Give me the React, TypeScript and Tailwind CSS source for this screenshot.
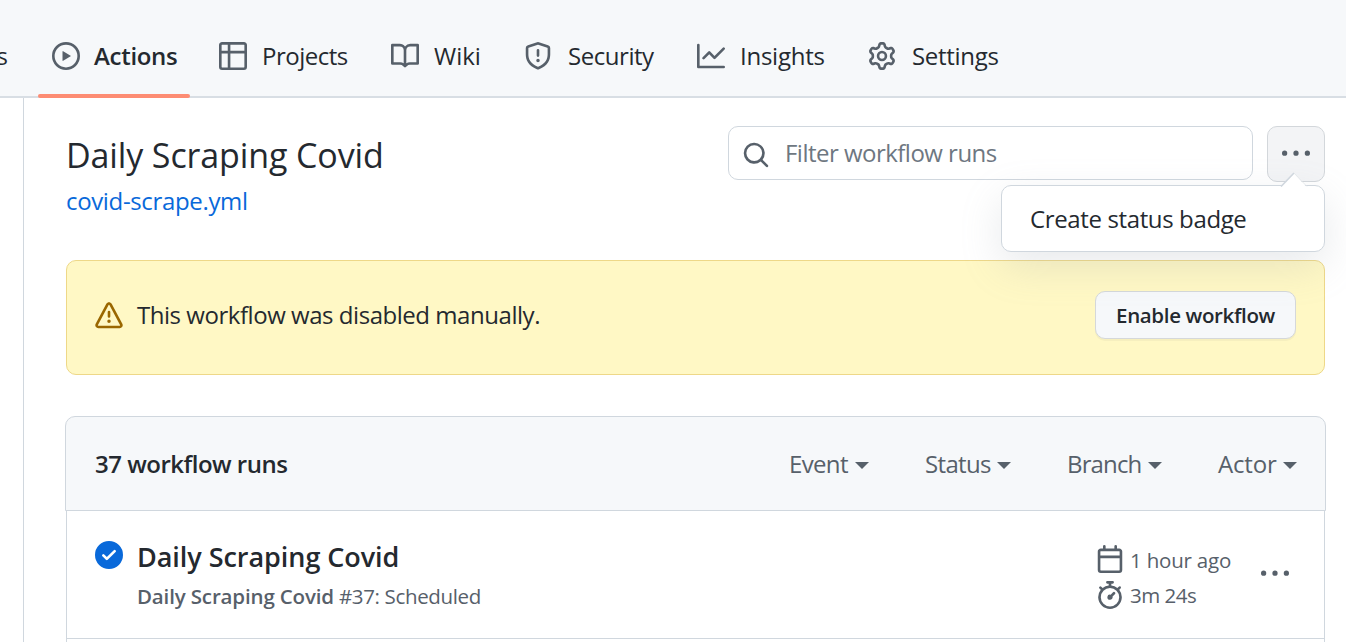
import React from 'react';

const icons = {
  play: 'M8 0a8 8 0 1 1 0 16A8 8 0 0 1 8 0ZM1.5 8a6.5 6.5 0 1 0 13 0 6.5 6.5 0 0 0-13 0Zm4.879-2.773 4.264 2.559a.25.25 0 0 1 0 .428l-4.264 2.559A.25.25 0 0 1 6 10.559V5.442a.25.25 0 0 1 .379-.215Z',
  table: 'M0 1.75C0 .784.784 0 1.75 0h12.5C15.216 0 16 .784 16 1.75v12.5A1.75 1.75 0 0 1 14.25 16H1.75A1.75 1.75 0 0 1 0 14.25ZM6.5 6.5v8h7.75a.25.25 0 0 0 .25-.25V6.5Zm8-1.5V1.75a.25.25 0 0 0-.25-.25H6.5V5Zm-13 1.5v7.75c0 .138.112.25.25.25H5v-8ZM5 5V1.5H1.75a.25.25 0 0 0-.25.25V5Z',
  book: 'M0 1.75A.75.75 0 0 1 .75 1h4.253c1.227 0 2.317.59 3 1.501A3.743 3.743 0 0 1 11.006 1h4.245a.75.75 0 0 1 .75.75v10.5a.75.75 0 0 1-.75.75h-4.507a2.25 2.25 0 0 0-1.591.659l-.622.621a.75.75 0 0 1-1.06 0l-.622-.621A2.25 2.25 0 0 0 5.258 13H.75a.75.75 0 0 1-.75-.75Zm7.251 10.324.004-5.073-.002-2.253A2.25 2.25 0 0 0 5.003 2.5H1.5v9h3.757a3.75 3.75 0 0 1 1.994.574ZM8.755 4.75l-.004 7.322a3.752 3.752 0 0 1 1.992-.572H14.5v-9h-3.495a2.25 2.25 0 0 0-2.25 2.25Z',
  shield: 'M7.467.133a1.748 1.748 0 0 1 1.066 0l5.25 1.68A1.75 1.75 0 0 1 15 3.48V7c0 1.566-.32 3.182-1.303 4.682-.983 1.498-2.585 2.813-5.032 3.855a1.697 1.697 0 0 1-1.33 0c-2.447-1.042-4.049-2.357-5.032-3.855C1.32 10.182 1 8.566 1 7V3.48a1.75 1.75 0 0 1 1.217-1.667Zm.61 1.429a.25.25 0 0 0-.153 0l-5.25 1.68a.25.25 0 0 0-.174.238V7c0 1.358.275 2.666 1.057 3.86.784 1.194 2.121 2.34 4.366 3.297a.196.196 0 0 0 .154 0c2.245-.956 3.582-2.104 4.366-3.298C13.225 9.666 13.5 8.36 13.5 7V3.48a.251.251 0 0 0-.174-.237l-5.25-1.68ZM8.75 4.75v3a.75.75 0 0 1-1.5 0v-3a.75.75 0 0 1 1.5 0ZM9 10.5a1 1 0 1 1-2 0 1 1 0 0 1 2 0Z',
  graph: 'M1.5 1.75V13.5h13.75a.75.75 0 0 1 0 1.5H.75a.75.75 0 0 1-.75-.75V1.75a.75.75 0 0 1 1.5 0Zm14.28 2.53-5.25 5.25a.75.75 0 0 1-1.06 0L7 7.06 4.28 9.78a.751.751 0 0 1-1.042-.018.751.751 0 0 1-.018-1.042l3.25-3.25a.75.75 0 0 1 1.06 0L10 7.94l4.72-4.72a.751.751 0 0 1 1.042.018.751.751 0 0 1 .018 1.042Z',
  gear: 'M8 0a8.2 8.2 0 0 1 .701.031C9.444.095 9.99.645 10.16 1.29l.288 1.107c.018.066.079.158.212.224.231.114.454.243.668.386.123.082.233.09.299.071l1.103-.303c.644-.176 1.392.021 1.82.63.27.385.506.792.704 1.218.315.675.111 1.422-.364 1.891l-.814.806c-.049.048-.098.147-.088.294.016.257.016.515 0 .772-.01.147.038.246.088.294l.814.806c.475.469.679 1.216.364 1.891a7.977 7.977 0 0 1-.704 1.217c-.428.61-1.176.807-1.82.63l-1.102-.302c-.067-.019-.177-.011-.3.071a5.909 5.909 0 0 1-.668.386c-.133.066-.194.158-.211.224l-.29 1.106c-.168.646-.715 1.196-1.458 1.26a8.006 8.006 0 0 1-1.402 0c-.743-.064-1.289-.614-1.458-1.26l-.289-1.106c-.018-.066-.079-.158-.212-.224a5.738 5.738 0 0 1-.668-.386c-.123-.082-.233-.09-.299-.071l-1.103.303c-.644.176-1.392-.021-1.82-.63a8.12 8.12 0 0 1-.704-1.218c-.315-.675-.111-1.422.363-1.891l.815-.806c.05-.048.098-.147.088-.294a6.214 6.214 0 0 1 0-.772c.01-.147-.038-.246-.088-.294l-.815-.806C.635 6.045.431 5.298.746 4.623a7.92 7.92 0 0 1 .704-1.217c.428-.61 1.176-.807 1.82-.63l1.102.302c.067.019.177.011.3-.071.214-.143.437-.272.668-.386.133-.066.194-.158.211-.224l.29-1.106C6.009.645 6.556.095 7.299.03 7.53.01 7.764 0 8 0Zm-.571 1.525c-.036.003-.108.036-.137.146l-.289 1.105c-.147.561-.549.967-.998 1.189-.173.086-.34.183-.5.29-.417.278-.97.423-1.529.27l-1.103-.303c-.109-.03-.175.016-.195.045-.22.312-.412.644-.573.99-.014.031-.021.11.059.19l.815.806c.411.406.562.957.53 1.456a4.709 4.709 0 0 0 0 .582c.032.499-.119 1.05-.53 1.456l-.815.806c-.081.08-.073.159-.059.19.162.346.353.677.573.989.02.03.085.076.195.046l1.102-.303c.56-.153 1.113-.008 1.53.27.161.107.328.204.501.29.447.222.85.629.997 1.189l.289 1.105c.029.109.101.143.137.146a6.6 6.6 0 0 0 1.142 0c.036-.003.108-.036.137-.146l.289-1.105c.147-.561.549-.967.998-1.189.173-.086.34-.183.5-.29.417-.278.97-.423 1.529-.27l1.103.303c.109.029.175-.016.195-.045.22-.313.411-.644.573-.99.014-.031.021-.11-.059-.19l-.815-.806c-.411-.406-.562-.957-.53-1.456a4.709 4.709 0 0 0 0-.582c-.032-.499.119-1.05.53-1.456l.815-.806c.081-.08.073-.159.059-.19a6.464 6.464 0 0 0-.573-.989c-.02-.03-.085-.076-.195-.046l-1.102.303c-.56.153-1.113.008-1.53-.27a4.44 4.44 0 0 0-.501-.29c-.447-.222-.85-.629-.997-1.189l-.289-1.105c-.029-.11-.101-.143-.137-.146a6.6 6.6 0 0 0-1.142 0ZM11 8a3 3 0 1 1-6 0 3 3 0 0 1 6 0ZM9.5 8a1.5 1.5 0 1 0-3.001.001A1.5 1.5 0 0 0 9.5 8Z',
  search: 'M10.68 11.74a6 6 0 0 1-7.922-8.982 6 6 0 0 1 8.982 7.922l3.04 3.04a.749.749 0 0 1-.326 1.275.749.749 0 0 1-.734-.215ZM11.5 7a4.499 4.499 0 1 0-8.997 0A4.499 4.499 0 0 0 11.5 7Z',
  kebab: 'M8 9a1.5 1.5 0 1 0 0-3 1.5 1.5 0 0 0 0 3ZM1.5 9a1.5 1.5 0 1 0 0-3 1.5 1.5 0 0 0 0 3Zm13 0a1.5 1.5 0 1 0 0-3 1.5 1.5 0 0 0 0 3Z',
  alert: 'M8.22 1.754a.25.25 0 0 0-.44 0L1.698 13.132a.25.25 0 0 0 .22.368h12.164a.25.25 0 0 0 .22-.368L8.22 1.754Zm-1.763-.707c.659-1.234 2.427-1.234 3.086 0l6.082 11.378A1.75 1.75 0 0 1 14.082 15H1.918a1.75 1.75 0 0 1-1.543-2.575L6.457 1.047ZM9 11a1 1 0 1 1-2 0 1 1 0 0 1 2 0Zm-.25-5.25a.75.75 0 0 0-1.5 0v2.5a.75.75 0 0 0 1.5 0v-2.5Z',
  check: 'M8 16A8 8 0 1 1 8 0a8 8 0 0 1 0 16Zm3.78-9.72a.751.751 0 0 0-.018-1.042.751.751 0 0 0-1.042-.018L6.75 9.19 5.28 7.72a.751.751 0 0 0-1.042.018.751.751 0 0 0-.018 1.042l2 2a.75.75 0 0 0 1.06 0Z',
  calendar: 'M4.75 0a.75.75 0 0 1 .75.75V2h5V.75a.75.75 0 0 1 1.5 0V2h1.25c.966 0 1.75.784 1.75 1.75v10.5A1.75 1.75 0 0 1 13.25 16H2.75A1.75 1.75 0 0 1 1 14.25V3.75C1 2.784 1.784 2 2.75 2H4V.75A.75.75 0 0 1 4.75 0ZM2.5 7.5v6.75c0 .138.112.25.25.25h10.5a.25.25 0 0 0 .25-.25V7.5Zm10.75-4H2.75a.25.25 0 0 0-.25.25V6h11V3.75a.25.25 0 0 0-.25-.25Z',
  stopwatch: 'M5.75.75A.75.75 0 0 1 6.5 0h3a.75.75 0 0 1 0 1.5h-.75v1l-.001.041a6.724 6.724 0 0 1 3.464 1.435l.007-.006.75-.75a.749.749 0 0 1 1.275.326.749.749 0 0 1-.215.734l-.75.75-.006.007a6.75 6.75 0 1 1-10.548 0L2.72 5.03l-.75-.75a.751.751 0 0 1 .018-1.042.751.751 0 0 1 1.042-.018l.75.75.007.006A6.72 6.72 0 0 1 7.25 2.541V1.5H6.5a.75.75 0 0 1-.75-.75ZM8 14.5a5.25 5.25 0 1 0-.001-10.501A5.25 5.25 0 0 0 8 14.5Zm.389-6.7 1.33-1.33a.75.75 0 1 1 1.061 1.06L9.45 8.861A1.503 1.503 0 0 1 8 10.75a1.499 1.499 0 1 1 .389-2.95Z',
};

type IconName = keyof typeof icons;

function Icon({ name, className = 'text-[#57606a]' }: { name: IconName; className?: string }) {
  return (
    <svg viewBox="0 0 16 16" fill="currentColor" aria-hidden="true" className={`size-7 shrink-0 ${className}`}>
      <path d={icons[name]} />
    </svg>
  );
}

const tabs: { icon: IconName; label: string; box: string; text: string; active?: boolean }[] = [
  { icon: 'play', label: 'Actions', box: 'w-[152px] mr-[15px]', text: 'font-[560] tracking-[-0.3px]', active: true },
  { icon: 'table', label: 'Projects', box: 'w-[172px]', text: 'pl-px tracking-[-0.5px]' },
  { icon: 'book', label: 'Wiki', box: 'w-[133px]', text: 'pl-px' },
  { icon: 'shield', label: 'Security', box: 'w-[173px]', text: 'pl-[2px] tracking-[-0.45px]' },
  { icon: 'graph', label: 'Insights', box: 'w-[171px]', text: 'pl-px tracking-[-0.25px]' },
  { icon: 'gear', label: 'Settings', box: '', text: 'pl-[2px] tracking-[-0.3px]' },
];

const filters = [
  { label: 'Event', box: 'w-[136px]', text: 'w-[66px] tracking-[-0.65px]' },
  { label: 'Status', box: 'w-[142px]', text: 'w-[72px] tracking-[-0.65px]' },
  { label: 'Branch', box: 'w-[151px]', text: 'w-[81px] tracking-[-0.85px]' },
  { label: 'Actor', box: 'w-[79px]', text: 'w-[65px] tracking-[-0.15px]' },
];

function Nav() {
  return (
    <nav className="flex h-[98px] shrink-0 items-center border-b-2 border-[#d8dee4] bg-[#f6f8fa] pt-[16px]">
      <div className="w-[38px] shrink-0">
        <span className="-ml-[3.5px]">s</span>
      </div>
      {tabs.map((t) => (
        <a key={t.label} className={`relative flex h-full shrink-0 items-center gap-[14px] pl-[14px] whitespace-nowrap ${t.box}`}>
          <Icon name={t.icon} />
          <span className={t.text}>{t.label}</span>
          {t.active && <span className="absolute inset-x-0 -bottom-[1.5px] h-[3.5px] rounded-full bg-[#fd8c73]" />}
        </a>
      ))}
    </nav>
  );
}

function Menu() {
  return (
    <div className="absolute top-[59px] right-0 z-10 flex h-[67px] w-[324px] items-center rounded-[10px] border border-[#d0d7de] bg-white pl-[28px] shadow-[0_14px_42px_rgba(140,149,159,0.2)]">
      <svg viewBox="0 0 28 15" className="absolute -top-[14px] right-[16px] h-[15px] w-[28px]">
        <path d="M1.5 14.5 14 1.5 26.5 15H1.5Z" fill="#fff" />
        <path d="M1 14.5 14 1" stroke="#d0d7de" strokeWidth="1.6" fill="none" />
        <path d="M14 1 27 14.5" stroke="#e3e6ea" strokeWidth="0.7" fill="none" />
      </svg>
      <span className="tracking-[-0.37px] whitespace-nowrap">Create status badge</span>
    </div>
  );
}

function Header() {
  return (
    <header className="relative flex h-[134px] justify-between">
      <div className="whitespace-nowrap">
        <h1 className="mt-[6px] text-[34px] leading-[46px] tracking-[-0.12px]">Daily Scraping Covid</h1>
        <a className="mt-[6px] block leading-[34px] tracking-[-0.35px] text-[#0969da]">covid-scrape.yml</a>
      </div>
      <div className="flex gap-[14px]">
        <div className="flex h-[54px] w-[525px] items-center rounded-[10px] border border-[#d0d7de] px-[13px]">
          <Icon name="search" className="mt-[3px] text-[#57606a]" />
          <span className="ml-[15px] tracking-[-0.52px] whitespace-nowrap text-[#6e7781]">Filter workflow runs</span>
        </div>
        <button className="flex h-[56px] w-[58px] items-center justify-center rounded-[10px] border border-[#d3d7db] bg-[#f3f4f6]">
          <Icon name="kebab" />
        </button>
      </div>
      <Menu />
    </header>
  );
}

function Banner() {
  return (
    <div className="flex h-[115px] rounded-[10px] border border-[#eed888] bg-[#fff8c5] pt-[30px] pr-[28px] pl-[28px]">
      <Icon name="alert" className="mt-[11px] text-[#9a6700]" />
      <span className="ml-[14px] h-[48px] leading-[48px] tracking-[-0.46px] whitespace-nowrap">This workflow was disabled manually.</span>
      <button className="ml-auto h-[48px] w-[201px] rounded-[10px] border border-[#d5d8da] bg-[#f6f8fa] text-[20.5px] font-[560] tracking-[-0.35px] whitespace-nowrap shadow-[0_2px_0_rgba(31,35,40,0.04)]">
        Enable workflow
      </button>
    </div>
  );
}

function Runs() {
  return (
    <section className="mt-[41px]">
      <div className="-mx-px flex h-[95px] items-center rounded-t-[10px] border border-[#d0d7de] bg-[#f6f8fa] pr-[28px] pl-[29px]">
        <h2 className="font-[560] tracking-[-0.5px] whitespace-nowrap">37 workflow runs</h2>
        <div className="ml-auto flex text-[#57606a]">
          {filters.map((f) => (
            <div key={f.label} className={`flex items-center ${f.box}`}>
              <span className={f.text}>{f.label}</span>
              <svg viewBox="0 0 14 7" fill="currentColor" className="mt-[4px] h-[7px] w-[14px] shrink-0">
                <path d="M0 0h14L7 7Z" />
              </svg>
            </div>
          ))}
        </div>
      </div>
      <div className="flex h-[128px] border-x border-b border-[#d0d7de] pl-[28px] text-[20.5px] whitespace-nowrap text-[#57606a]">
        <Icon name="check" className="mt-[30px] text-[#0969da]" />
        <div className="ml-[14px]">
          <h3 className="mt-[28px] text-[27px] leading-[36px] font-[560] tracking-[-0.05px] text-[#24292f]">Daily Scraping Covid</h3>
          <p className="mt-[7px] leading-[28px] tracking-[-0.35px]">
            <span className="font-[560] tracking-[-0.15px]">Daily Scraping Covid</span> #37: Scheduled
          </p>
        </div>
        <div className="mt-[34px] ml-auto w-[165px]">
          <div className="flex h-[28px] items-center gap-[6px]">
            <Icon name="calendar" />
            <span className="mt-[3px] tracking-[-0.2px]">1 hour ago</span>
          </div>
          <div className="mt-[8px] flex h-[28px] items-center gap-[6px]">
            <Icon name="stopwatch" />
            <span className="mt-px tracking-[-0.5px]">3m 24s</span>
          </div>
        </div>
        <div className="mt-[49px] mr-[35px]">
          <Icon name="kebab" />
        </div>
      </div>
      <div className="h-[20px] border-x border-[#d0d7de]" />
    </section>
  );
}

export default function App() {
  return (
    <div className="flex h-[642px] w-[1346px] flex-col overflow-hidden bg-white font-['Open_Sans',sans-serif] text-[24px] text-[#24292f]">
      <Nav />
      <div className="flex flex-1">
        <div className="w-[24px] shrink-0 border-r border-[#d0d7de]" />
        <main className="flex-1 pt-[28px] pr-[21px] pl-[42px]">
          <Header />
          <Banner />
          <Runs />
        </main>
      </div>
    </div>
  );
}
